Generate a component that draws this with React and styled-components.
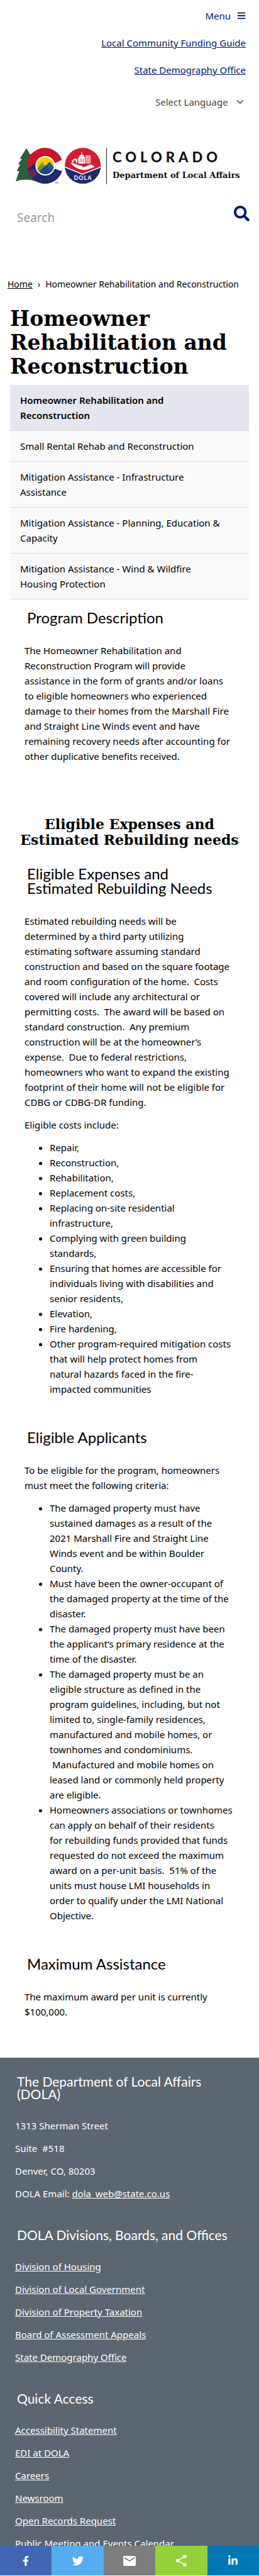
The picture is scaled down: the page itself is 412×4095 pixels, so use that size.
import React from 'react';
import styled, { createGlobalStyle } from 'styled-components';
import { FaBars, FaSearch, FaFacebookF, FaTwitter, FaLinkedinIn } from 'react-icons/fa';
import { MdEmail, MdShare } from 'react-icons/md';
import { FiChevronDown } from 'react-icons/fi';

const bodyFont = '"Noto Sans", "Open Sans", sans-serif';
const headFont = 'Lato, "Noto Sans", sans-serif';
const slabFont = '"DejaVu Serif", serif';
const navy = '#001970';

const GlobalStyle = createGlobalStyle`
  * { box-sizing: border-box; }
  body {
    margin: 0;
    background: #fff;
    color: #000;
    font: 15px/24px ${bodyFont};
  }
  h1, h2, h3, p, ul { margin: 0; }
`;

const Header = styled.header`
  padding: 13px 21px 0 25px;
`;

const TopNav = styled.nav`
  display: flex;
  flex-direction: column;
  align-items: flex-end;
  gap: 19px;
`;

const MenuButton = styled.button`
  display: flex;
  align-items: center;
  gap: 10px;
  padding: 0;
  border: 0;
  background: none;
  color: ${navy};
  font: inherit;
`;

const TopLink = styled.a`
  color: ${navy};
`;

const LanguagePicker = styled.label`
  display: flex;
  align-items: center;
  justify-content: flex-end;
  gap: 10px;
  margin-top: 27px;
  color: #444;
`;

const LanguageSelect = styled.select`
  appearance: none;
  padding: 0;
  border: 0;
  background: none;
  color: inherit;
  font: inherit;
`;

const Logo = styled.a`
  display: flex;
  margin-top: 61px;
  color: #111;
  text-decoration: none;
`;

const LogoMark = styled.svg`
  flex: none;
  width: 136px;
  height: 58px;
`;

const LogoText = styled.span`
  display: flex;
  flex-direction: column;
  gap: 7px;
  margin-left: 8px;
  padding: 3px 0 0 9px;
  border-left: 1px solid #222;
  white-space: nowrap;
`;

const LogoState = styled.span`
  font: 900 22px/24px ${headFont};
  letter-spacing: 6px;
`;

const LogoDepartment = styled.span`
  font: 700 13px/20px ${slabFont};
`;

const SearchForm = styled.form`
  display: flex;
  align-items: flex-start;
  justify-content: space-between;
  margin: 34px -6px 0 0;
`;

const SearchInput = styled.input`
  flex: 1;
  min-width: 0;
  height: 38px;
  padding: 0 2px;
  border: 0;
  background: none;
  color: #000;
  font: 19px/36px ${bodyFont};
  &::placeholder { color: #999; }
`;

const SearchButton = styled.button`
  display: flex;
  padding: 0;
  border: 0;
  background: none;
  color: ${navy};
`;

const Breadcrumb = styled.nav`
  display: flex;
  gap: 8px;
  margin-top: 75px;
  padding: 0 12px;
  font-size: 14px;
  a { color: #000; }
`;

const PageTitle = styled.h1`
  margin: 24px 16px 10px;
  font: 700 33px/38px ${slabFont};
`;

const SideMenu = styled.nav`
  margin: 0 16px;
`;

const SideLink = styled.a`
  display: block;
  padding: 12px 34px 12px 16px;
  border-bottom: 1px solid #ddd;
  background: ${(p) => (p.$active ? '#e6e6f0' : '#fafafa')};
  color: #000;
  font-weight: ${(p) => (p.$active ? 600 : 400)};
  text-decoration: none;
`;

const Content = styled.section`
  padding: ${(p) => p.$top}px 45px 0 39px;
`;

const SectionTitle = styled.h3`
  margin: 0 4px 29px;
  font: 400 24px/23px ${headFont};
`;

const SlabTitle = styled.h2`
  margin-top: 84px;
  padding: 0 24px;
  font: 700 22px/25px ${slabFont};
  text-align: center;
`;

const Paragraph = styled.p`
  margin-bottom: 12px;
  &:last-child { margin-bottom: 0; }
`;

const Bullets = styled.ul`
  margin-right: -4px;
  padding-left: 40px;
  white-space: pre-line;
`;

const Footer = styled.footer`
  display: flex;
  flex-direction: column;
  gap: 44px;
  margin-top: 61px;
  padding: 28px 24px 41px;
  background: #5c6670;
  color: #fff;
`;

const FooterGroup = styled.section`
  display: flex;
  flex-direction: column;
  align-items: flex-start;
  gap: 12px;
`;

const FooterTitle = styled.h2`
  margin: 0 3px 16px;
  font: 400 21px/20px ${headFont};
`;

const FooterLink = styled.a`
  color: #fff;
`;

const ShareBar = styled.div`
  position: fixed;
  right: 0;
  bottom: 0;
  left: 0;
  display: flex;
  border-bottom: 1px solid #f4f4f4;
`;

const ShareButton = styled.button`
  display: flex;
  flex: 1;
  align-items: center;
  justify-content: center;
  height: 47px;
  padding: 0;
  border: 0;
  background: ${(p) => p.$color};
  color: #fff;
`;

const sideLinks = [
  'Homeowner Rehabilitation and Reconstruction',
  'Small Rental Rehab and Reconstruction',
  'Mitigation Assistance - Infrastructure Assistance',
  'Mitigation Assistance - Planning, Education & Capacity',
  'Mitigation Assistance - Wind & Wildfire Housing Protection',
];

const eligibleCosts = [
  'Repair,',
  'Reconstruction,',
  'Rehabilitation,',
  'Replacement costs,',
  'Replacing on-site residential infrastructure,',
  'Complying with green building standards,',
  'Ensuring that homes are accessible for individuals living with disabilities and senior residents,',
  'Elevation,',
  'Fire hardening,',
  'Other program-required mitigation costs that will help protect homes from\nnatural hazards faced in the fire-\u200bimpacted communities',
];

const criteria = [
  'The damaged property must have sustained damages as a result of the 2021 Marshall Fire and Straight Line Winds event and be within Boulder County.',
  'Must have been the owner-occupant of the damaged property at the time of the disaster.',
  'The damaged property must have been the applicant’s primary residence at the time of the disaster.',
  'The damaged property must be an eligible structure as defined in the program guidelines, including, but not limited to, single-family residences, manufactured and mobile homes, or townhomes and condominiums. \u00a0Manufactured and mobile homes on leased land or commonly held property are eligible.',
  'Homeowners associations or townhomes can apply on behalf of their residents\nfor rebuilding funds provided that funds requested do not exceed the maximum award on a per-unit basis.\u00a0 51% of the units must house LMI households in order to qualify under the LMI National Objective.',
];

const divisions = [
  'Division of Housing',
  'Division of Local Government',
  'Division of Property Taxation',
  'Board of Assessment Appeals',
  'State Demography Office',
];

const quickAccess = [
  'Accessibility Statement',
  'EDI at DOLA',
  'Careers',
  'Newsroom',
  'Open Records Request',
  'Public Meeting and Events Calendar',
];

const shares = [
  { name: 'Facebook', color: '#4267b2', icon: <FaFacebookF size={16} /> },
  { name: 'Twitter', color: '#55acee', icon: <FaTwitter size={18} /> },
  { name: 'Email', color: '#7d7d7d', icon: <MdEmail size={24} /> },
  { name: 'ShareThis', color: '#95d03a', icon: <MdShare size={23} /> },
  { name: 'LinkedIn', color: '#0077b5', icon: <FaLinkedinIn size={17} /> },
];

function ColoradoMark() {
  return (
    <LogoMark viewBox="0 0 136 58" aria-hidden="true">
      <defs>
        <clipPath id="ring"><circle cx="46.5" cy="28.5" r="28.5" /></clipPath>
        <clipPath id="sun"><circle cx="47" cy="28.5" r="13.6" /></clipPath>
        <clipPath id="seal"><circle cx="106.7" cy="28.5" r="28.5" /></clipPath>
      </defs>
      <path d="M17 .5 6.500 17.500H10L3.500 26.500H7L1.500 37H5.500L0 53.500C10 50 20 49 34 54V10H22.500Z" fill="#2a5f40" />
      <g clipPath="url(#ring)">
        <rect x="18" width="57" height="57" fill="#c8152d" />
        <path d="M14 38 28 26 47 28.500 75 34V58H14Z" fill="#1f2a6e" />
        <path d="M14 36 31 34 36 39 25 50 14 46Z" fill="#6b2459" />
        <path d="M47 28.500 60 25.500 76 18V38L60 32.500Z" fill="#fff" />
      </g>
      <circle cx="47" cy="28.500" r="15.600" fill="#fff" />
      <g clipPath="url(#sun)">
        <rect x="32" y="14" width="30" height="30" fill="#fc0" />
        <path d="M31 38 42 22 48 30 54 22 63 34V44H31Z" fill="#5f9732" />
        <path d="M47 29 54 22 63 34V44H47Z" fill="#28578f" />
        <path d="M37 30 42 22 46 28 42 27Z" fill="#9aa51e" />
        <path d="M31 43 48 28 63 42V46H31Z" fill="#24457f" />
      </g>
      <text x="62" y="57" fontSize="4" fontFamily="Lato, sans-serif" fill="#222">TM</text>
      <g clipPath="url(#seal)">
        <rect x="78" width="58" height="58" fill="#cf1f34" />
        <path d="M76 30 106 42.500 138 30V58H76Z" fill="#1f2a6e" />
        <path d="M76 29.500 106 42 138 29.500" fill="none" stroke="#fff" strokeWidth="1.500" />
      </g>
      <path d="M87 24.500C92 24 95 25 99 27.500L106 29C108 30 106 31 103 30.500 110 32 114 27.500 120 26.500L126 30C118 33 113 36 107 35 99 34 94 31 87 24.500Z" fill="#fff" />
      <path d="M89 21 93 17 98 18V23.500H95.500V20H92V23.500H89ZM99.500 15H101C101 12.500 102.500 11 104.500 10.500V7H105.500V10.500C108 11 109 12.500 109 15H110V25H99.500Z" fill="#fff" />
      <path d="M102.500 17V23M105 17V23M107.500 17V23" stroke="#cf1f34" strokeWidth=".8" />
      <path d="M111.500 12.500H118.500V25M111.500 12.500V25M113.800 12.500V25M116.200 12.500V25M111.500 15H118.500M111.500 18H118.500M111.500 21H118.500M111.500 24H118.500" fill="none" stroke="#fff" strokeWidth=".9" />
      <text x="107" y="51" textAnchor="middle" fontSize="9" fontWeight="700" letterSpacing="1" fontFamily="Lato, sans-serif" fill="#fff">DOLA</text>
    </LogoMark>
  );
}

function Bulleted({ items }) {
  return <Bullets>{items.map((item) => <li key={item}>{item}</li>)}</Bullets>;
}

export default function App() {
  return (
    <>
      <GlobalStyle />
      <Header>
        <TopNav>
          <MenuButton type="button">Menu <FaBars size={14} /></MenuButton>
          <TopLink href="#funding">Local Community Funding Guide</TopLink>
          <TopLink href="#demography">State Demography Office</TopLink>
        </TopNav>
        <LanguagePicker>
          <LanguageSelect aria-label="Select Language">
            <option>Select Language</option>
          </LanguageSelect>
          <FiChevronDown size={18} />
        </LanguagePicker>
        <Logo href="#home">
          <ColoradoMark />
          <LogoText>
            <LogoState>COLORADO</LogoState>
            <LogoDepartment>Department of Local Affairs</LogoDepartment>
          </LogoText>
        </Logo>
        <SearchForm>
          <SearchInput type="search" placeholder="Search" aria-label="Search" />
          <SearchButton type="button" aria-label="Submit search"><FaSearch size={25} /></SearchButton>
        </SearchForm>
      </Header>
      <main>
        <Breadcrumb aria-label="Breadcrumb">
          <a href="#home">Home</a>
          <span>›</span>
          <span>Homeowner Rehabilitation and Reconstruction</span>
        </Breadcrumb>
        <PageTitle>Homeowner Rehabilitation and Reconstruction</PageTitle>
        <SideMenu aria-label="Programs">
          {sideLinks.map((label, i) => (
            <SideLink key={label} href={`#program-${i}`} $active={i === 0}>{label}</SideLink>
          ))}
        </SideMenu>
        <Content $top={17}>
          <SectionTitle>Program Description</SectionTitle>
          <Paragraph>
            The Homeowner Rehabilitation and Reconstruction Program will provide assistance in the form of
            grants and/or loans to eligible homeowners who experienced damage to their homes from the
            Marshall Fire and Straight Line Winds event and have remaining recovery needs after accounting
            for other duplicative benefits received.
          </Paragraph>
        </Content>
        <SlabTitle>Eligible Expenses and Estimated Rebuilding needs</SlabTitle>
        <Content $top={29}>
          <SectionTitle>Eligible Expenses and Estimated Rebuilding Needs</SectionTitle>
          <Paragraph>
            Estimated rebuilding needs will be<br />
            determined by a third party utilizing estimating software
            assuming standard construction and based on the square footage and room configuration of the
            home.&nbsp; Costs covered will include any architectural or permitting costs.&nbsp; The award
            will be based on standard construction.&nbsp; Any premium construction will be at the
            homeowner’s expense.&nbsp; Due to federal restrictions, homeowners who want to expand the
            existing footprint of their home will not be eligible for CDBG or CDBG-DR funding.
          </Paragraph>
          <Paragraph>Eligible costs include:</Paragraph>
          <Bulleted items={eligibleCosts} />
        </Content>
        <Content $top={53}>
          <SectionTitle>Eligible Applicants</SectionTitle>
          <Paragraph>To be eligible for the program, homeowners must meet the following criteria:</Paragraph>
          <Bulleted items={criteria} />
        </Content>
        <Content $top={53}>
          <SectionTitle>Maximum Assistance</SectionTitle>
          <Paragraph>The maximum award per unit is currently $100,000.</Paragraph>
        </Content>
      </main>
      <Footer>
        <FooterGroup>
          <FooterTitle>The Department of Local Affairs (DOLA)</FooterTitle>
          <p>1313 Sherman Street</p>
          <p>Suite&nbsp; #518</p>
          <p>Denver, CO, 80203</p>
          <p>DOLA Email: <FooterLink href="mailto:dola_web@state.co.us">dola_web@state.co.us</FooterLink></p>
        </FooterGroup>
        <FooterGroup>
          <FooterTitle>DOLA Divisions, Boards, and Offices</FooterTitle>
          {divisions.map((label) => <FooterLink key={label} href="#division">{label}</FooterLink>)}
        </FooterGroup>
        <FooterGroup>
          <FooterTitle>Quick Access</FooterTitle>
          {quickAccess.map((label) => <FooterLink key={label} href="#quick">{label}</FooterLink>)}
        </FooterGroup>
      </Footer>
      <ShareBar>
        {shares.map(({ name, color, icon }) => (
          <ShareButton key={name} type="button" aria-label={`Share on ${name}`} $color={color}>{icon}</ShareButton>
        ))}
      </ShareBar>
    </>
  );
}
